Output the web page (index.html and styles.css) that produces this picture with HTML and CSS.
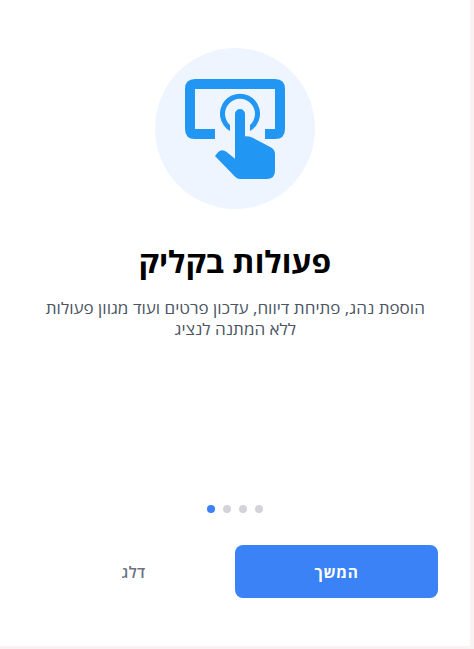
FILE: index.html
```html
<!DOCTYPE html>
<html lang="he" dir="rtl">
<head>
<meta charset="utf-8">
<title>פעולות בקליק</title>
<link rel="stylesheet" href="styles.css">
</head>
<body>
<main class="card">
  <div class="hero">
    <svg class="hero-icon" viewBox="0 0 300 300" aria-hidden="true">
      <path d="M90 180H30Q0 180 0 150V30Q0 0 30 0H270Q300 0 300 30V150Q300 180 270 180H240V150H270V30H30V150H90Z"/>
      <path d="M135 156A60 60 0 1 1 195 156V138A45 45 0 1 0 135 138Z"/>
      <path d="M150 239V105A15 15 0 0 1 180 105V172Q194 172 203 176L257 205Q270 212 270 225V275Q270 300 245 300H165Q157 300 151 294L90 231L99 220Q110 208 124 218Z"/>
    </svg>
  </div>
  <h1 class="title">פעולות בקליק</h1>
  <p class="description"><span class="line">הוספת נהג, פתיחת דיווח, עדכון פרטים ועוד מגוון פעולות</span><span class="line">ללא המתנה לנציג</span></p>
  <div class="dots"><i class="dot"></i><i class="dot"></i><i class="dot"></i><i class="dot active"></i></div>
  <div class="actions">
    <button class="button primary">המשך</button>
    <button class="button skip">דלג</button>
  </div>
</main>
</body>
</html>
```
FILE: styles.css
```css
* { box-sizing: border-box; }
body {
  margin: 0;
  height: 649px;
  overflow: hidden;
  direction: ltr;
  background: #faf1f2;
  font-family: "Open Sans", "Noto Sans", sans-serif;
}
.card {
  width: 470px;
  height: 646px;
  padding: 48px 32px;
  background: #fff;
  direction: rtl;
  display: flex;
  flex-direction: column;
  align-items: center;
}
.hero {
  width: 160px;
  height: 161px;
  flex: none;
  border-radius: 50%;
  background: #eef5ff;
  display: flex;
  justify-content: center;
  align-items: center;
}
.hero-icon { width: 100px; height: 100px; fill: #2196f3; }
.title {
  margin: 32px 0 0;
  height: 42px;
  line-height: 42px;
  font-size: 30px;
  font-weight: 700;
  color: #000;
  white-space: nowrap;
  transform: scaleX(1.06);
}
.description {
  margin: 15px 0 0;
  font-size: 15.5px;
  line-height: 21px;
  color: #4b5563;
  text-align: center;
  white-space: nowrap;
  transform: scaleX(1.1);
}
.line { display: block; }
.dots { margin-top: auto; display: flex; gap: 8px; }
.dot { width: 8px; height: 8px; border-radius: 50%; background: #d1d5db; }
.dot.active { background: #3b82f6; }
.actions { display: flex; width: 100%; margin-top: 32px; }
.button {
  flex: 1;
  height: 53px;
  padding: 2px 0 0;
  border: 0;
  border-radius: 8px;
  font: 600 15.5px/21px "Open Sans", "Noto Sans", sans-serif;
  letter-spacing: 0.3px;
}
.primary { background: #3b82f6; color: #fff; font-weight: 700; letter-spacing: 0.7px; }
.skip { background: transparent; color: #6b7280; }
```
